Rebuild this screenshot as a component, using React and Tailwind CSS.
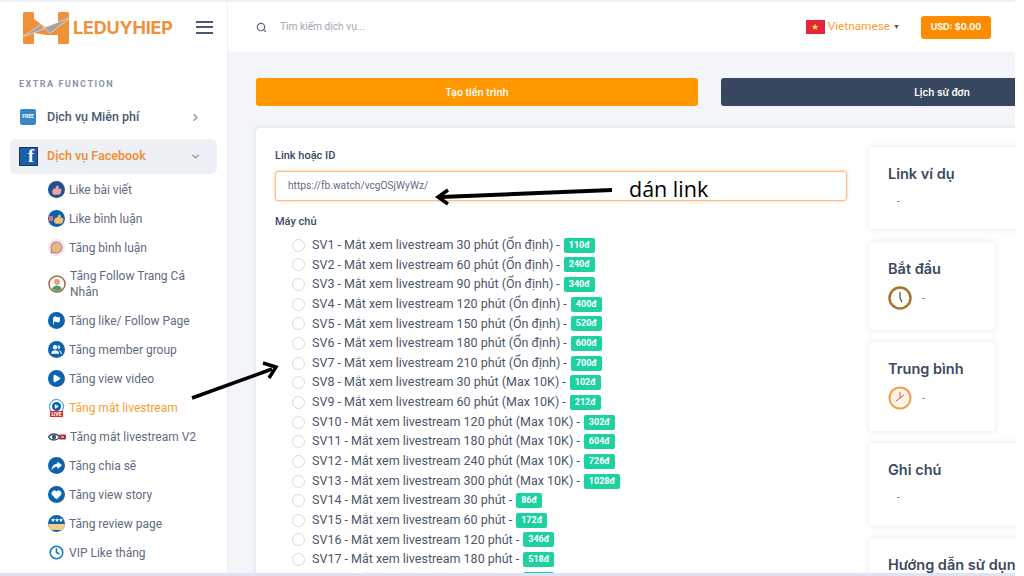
import React from 'react';
import { ChevronRight, ChevronDown, Search, ThumbsUp, Flag, Users, Play, Heart, Star, Clock, MessageCircle } from 'lucide-react';

const subItems = [
    { name: 'Like bài viết', icon: 'like' },
    { name: 'Like bình luận', icon: 'likeComment' },
    { name: 'Tăng bình luận', icon: 'comment' },
    { name: 'Tăng Follow Trang Cá Nhân', icon: 'person' },
    { name: 'Tăng like/ Follow Page', icon: 'flag' },
    { name: 'Tăng member group', icon: 'users' },
    { name: 'Tăng view video', icon: 'play' },
    { name: 'Tăng mắt livestream', icon: 'live', active: true },
    { name: 'Tăng mắt livestream V2', icon: 'eye' },
    { name: 'Tăng chia sẽ', icon: 'share' },
    { name: 'Tăng view story', icon: 'heart' },
    { name: 'Tăng review page', icon: 'review' },
    { name: 'VIP Like tháng', icon: 'vip' },
];

const servers = [
    ['SV1 - Mắt xem livestream 30 phút (Ổn định) -', '110đ'],
    ['SV2 - Mắt xem livestream 60 phút (Ổn định) -', '240đ'],
    ['SV3 - Mắt xem livestream 90 phút (Ổn định) -', '340đ'],
    ['SV4 - Mắt xem livestream 120 phút (Ổn định) -', '400đ'],
    ['SV5 - Mắt xem livestream 150 phút (Ổn định) -', '520đ'],
    ['SV6 - Mắt xem livestream 180 phút (Ổn định) -', '600đ'],
    ['SV7 - Mắt xem livestream 210 phút (Ổn định) -', '700đ'],
    ['SV8 - Mắt xem livestream 30 phút (Max 10K) -', '102đ'],
    ['SV9 - Mắt xem livestream 60 phút (Max 10K) -', '212đ'],
    ['SV10 - Mắt xem livestream 120 phút (Max 10K) -', '302đ'],
    ['SV11 - Mắt xem livestream 180 phút (Max 10K) -', '604đ'],
    ['SV12 - Mắt xem livestream 240 phút (Max 10K) -', '726đ'],
    ['SV13 - Mắt xem livestream 300 phút (Max 10K) -', '1028đ'],
    ['SV14 - Mắt xem livestream 30 phút -', '86đ'],
    ['SV15 - Mắt xem livestream 60 phút -', '172đ'],
    ['SV16 - Mắt xem livestream 120 phút -', '346đ'],
    ['SV17 - Mắt xem livestream 180 phút -', '518đ'],
    ['SV18 - Mắt xem livestream 240 phút -', '690đ'],
];

const Disc = ({ bg = 'bg-[#0b62ad]', children }) => (
    <span className={`flex h-[17px] w-[17px] shrink-0 items-center justify-center overflow-hidden rounded-full text-white ${bg}`}>{children}</span>
);

const SubIcon = ({ type }) => {
    if (type === 'like') return <Disc bg="bg-[#23508f]"><ThumbsUp size={10} fill="#f3a6a0" stroke="#f3a6a0" /></Disc>;
    if (type === 'likeComment') {
        return (
            <Disc>
                <span className="mr-[1px] h-[5px] w-[4px] bg-[#ef6a6a]"></span>
                <ThumbsUp size={10} fill="#f6c26b" stroke="#f6c26b" />
            </Disc>
        );
    }
    if (type === 'comment') return <Disc bg="bg-[#efe6f3]"><MessageCircle size={13} fill="#e8b48c" stroke="#b98a6a" /></Disc>;
    if (type === 'person') {
        return (
            <svg width="18" height="18" viewBox="0 0 18 18" className="shrink-0">
                <circle cx="9" cy="9" r="8" fill="#fff" stroke="#9a6b45" strokeWidth="1.5" />
                <circle cx="9" cy="7" r="3" fill="#e9a27e" />
                <path d="M4 14c1-3 3-3.500 5-3.500s4 .5 5 3.500a7 7 0 0 1-10 0z" fill="#4f9b6e" />
            </svg>
        );
    }
    if (type === 'flag') return <Disc><Flag size={9} fill="#fff" /></Disc>;
    if (type === 'users') return <Disc><Users size={11} fill="#fff" /></Disc>;
    if (type === 'play') return <Disc><Play size={9} fill="#fff" /></Disc>;
    if (type === 'live') {
        return (
            <span className="relative flex h-[18px] w-[17px] shrink-0 items-start justify-center">
                <span className="flex h-[15px] w-[15px] items-center justify-center rounded-full border border-[#2f86c9] bg-white">
                    <span className="flex h-[9px] w-[9px] items-center justify-center rounded-full bg-[#0b62ad] text-white"><Play size={5} fill="#fff" /></span>
                </span>
                <span className="absolute bottom-0 left-[2px] h-[6px] w-[13px] bg-[#e52b2b] text-center font-bold leading-[6px] text-[5px] text-white">LIVE</span>
            </span>
        );
    }
    if (type === 'eye') {
        return (
            <svg width="18" height="10" viewBox="0 0 18 10" className="shrink-0">
                <path d="M0.500 5C3 1 9 1 11.500 5C9 9 3 9 0.500 5z" fill="#fff" stroke="#44546f" strokeWidth="1.300" />
                <circle cx="6" cy="5" r="2.200" fill="#44546f" />
                <rect x="11" y="2.500" width="7" height="5" rx="1" fill="#a8324a" />
                <rect x="13" y="4.500" width="3" height="1" fill="#fff" />
            </svg>
        );
    }
    if (type === 'share') {
        return (
            <Disc>
                <svg width="11" height="10" viewBox="0 0 11 10">
                    <path d="M6.500 0.500L11 4.200L6.500 8V5.700C4 5.700 2 6.500 0.500 9.500C0.800 5.500 3 2.800 6.500 2.500z" fill="#fff" />
                </svg>
            </Disc>
        );
    }
    if (type === 'heart') return <Disc><Heart size={11} fill="#fff" /></Disc>;
    if (type === 'review') {
        return (
            <Disc>
                <span className="flex flex-col items-center">
                    <span className="flex"><Star size={4} fill="#fff" /><Star size={4} fill="#fff" /><Star size={4} fill="#fff" /></span>
                    <span className="mt-[2px] h-[6px] w-[17px] bg-[#f0cf87]"></span>
                </span>
            </Disc>
        );
    }
    return (
        <span className="flex h-[17px] w-[17px] shrink-0 items-center justify-center text-[#1479c4]"><Clock size={15} strokeWidth={2.5} /></span>
    );
};

const Logo = () => (
    <div className="flex items-center">
        <svg width="52" height="36" viewBox="0 0 52 36" className="shrink-0">
            <rect x="2" y="3" width="11" height="32" rx="1.500" fill="#f0913a" />
            <rect x="37" y="3" width="11" height="32" rx="1.500" fill="#f0913a" />
            <path d="M13 10L24 18L37 14V26H26L13 24z" fill="#f0913a" />
            <path d="M0.700 28.300L20.700 15L22.300 19.300L50.700 7.700L29 24.300L24 19.500z" fill="#a3a3a3" stroke="#fff" strokeWidth="0.500" />
        </svg>
        <span className="ml-[0px] text-[18px] font-bold tracking-[-0.2px] text-[#f0913a] [font-family:Inter,sans-serif]">LEDUYHIEP</span>
    </div>
);

const InfoCard = ({ title, children, box }) => (
    <div className={`shrink-0 rounded-[4px] bg-white px-[19px] pt-[17px] shadow-[0_0_6px_rgba(60,70,90,0.14)] ${box}`}>
        <h4 className="text-[14.500px] font-semibold leading-[20px] text-[#3b4a5f] [font-family:Inter,sans-serif]">{title}</h4>
        {children}
    </div>
);

const ClockBrown = () => (
    <svg width="24" height="24" viewBox="0 0 24 24">
        <circle cx="12" cy="12" r="10.500" fill="#fff" stroke="#a8742f" strokeWidth="2.500" />
        <path d="M12 6v6l2 4" fill="none" stroke="#4a4a4a" strokeWidth="1.200" />
    </svg>
);

const ClockOrange = () => (
    <svg width="24" height="24" viewBox="0 0 24 24">
        <circle cx="12" cy="12" r="10.500" fill="#fdf3e6" stroke="#f0a04b" strokeWidth="2" />
        <path d="M12 6v6l-4 3M12 12l4-3" fill="none" stroke="#d9534f" strokeWidth="1" />
    </svg>
);

const App = () => {
    return (
        <div className="h-[576px] w-[1024px] overflow-hidden bg-white [font-family:Roboto,sans-serif]">
            <div className="relative h-[573px] w-[1015px] overflow-hidden border-t-2 border-[#eef1f5]">
                <div className="flex h-full">
                    {/* Sidebar */}
                    <aside className="w-[228px] shrink-0 overflow-hidden border-r border-[#eef0f4] bg-white">
                        <div className="flex h-[50px] items-center pl-[21px] pr-[14px]">
                            <Logo />
                            <div className="ml-auto flex h-[13px] w-[17px] flex-col justify-between">
                                <span className="h-[2px] bg-[#4a5a70]"></span>
                                <span className="h-[2px] bg-[#4a5a70]"></span>
                                <span className="h-[2px] bg-[#4a5a70]"></span>
                            </div>
                        </div>
                        <p className="mt-[26px] pl-[19px] text-[9px] font-bold leading-[12px] tracking-[1.5px] text-[#8a94a6]">EXTRA FUNCTION</p>
                        <div className="mx-[10px] mt-[10px] flex h-[34px] items-center px-[10px]">
                            <span className="flex h-[16px] w-[16px] items-center justify-center rounded-[2px] bg-[#3a87c8] text-[5px] font-bold text-white">FREE</span>
                            <span className="ml-[11px] text-[12.500px] font-medium text-[#4a5a70]">Dịch vụ Miễn phí</span>
                            <ChevronRight size={11} strokeWidth={3} className="ml-auto mr-[6px] text-[#8a94a6]" />
                        </div>
                        <div className="mx-[10px] mt-[5px] flex h-[35px] items-center rounded-[6px] bg-[#edf0f5] px-[9px]">
                            <span className="flex h-[19px] w-[19px] items-end justify-end border border-[#17385f] bg-[#1b5fa8] pr-[3px] text-[18px] font-bold leading-[17px] text-white [font-family:'Liberation_Serif',serif]">f</span>
                            <span className="ml-[9px] text-[12.500px] font-semibold text-[#f0913a]">Dịch vụ Facebook</span>
                            <ChevronDown size={11} strokeWidth={3} className="ml-auto mr-[7px] text-[#8a94a6]" />
                        </div>
                        <nav className="mt-[1px] flex flex-col pl-[48px] pr-[20px]">
                            {subItems.map((item) => (
                                <div key={item.name} className="flex items-center gap-[4px] py-[6px]">
                                    <SubIcon type={item.icon} />
                                    <span className={`text-[12px] leading-[16px] ${item.active ? 'text-[#f7a02e]' : 'text-[#5f6b80]'}`}>{item.name}</span>
                                </div>
                            ))}
                            <span className="mt-[6px] h-[17px] w-[17px] rounded-full border border-[#8a94a6]"></span>
                        </nav>
                    </aside>

                    {/* Main */}
                    <div className="min-w-0 flex-1 overflow-hidden bg-[#f3f5f9]">
                        <header className="flex h-[50px] items-center bg-white pl-[28px]">
                            <Search size={11} strokeWidth={2.5} className="text-[#5c6778]" />
                            <span className="ml-[13px] text-[10.200px] text-[#a0a8b5]">Tìm kiếm dịch vụ...</span>
                            <div className="ml-auto flex items-center">
                                <span className="mr-[3px] flex h-[14px] w-[19px] items-center justify-center bg-[#e4253c] text-[9px] leading-none text-[#ffd83a]">★</span>
                                <span className="text-[11.800px] text-[#f7a02e]">Vietnamese</span>
                                <span className="ml-[3px] text-[7px] text-[#555]">▼</span>
                                <span className="ml-[21px] mr-[24px] flex h-[23px] w-[70px] items-center justify-center rounded-[3px] bg-[#ff8c00] text-[9px] font-bold text-white [font-family:Inter,sans-serif]">USD: $0.00</span>
                            </div>
                        </header>

                        <div className="pl-[28px]">
                            <div className="flex w-[1000px] gap-[23px] pt-[26px]">
                                <button className="h-[28px] w-[442px] rounded-[3px] bg-[#ff9800] text-[10px] font-semibold text-white [font-family:Inter,sans-serif]">Tạo tiến trình</button>
                                <button className="h-[28px] w-[442px] rounded-[3px] bg-[#36475f] text-[10px] font-semibold text-white [font-family:Inter,sans-serif]">Lịch sử đơn</button>
                            </div>

                            <div className="mt-[22px] flex h-[500px] w-[1000px] rounded-[4px] bg-white pl-[19px] pt-[20px] shadow-[0_0_5px_rgba(60,70,90,0.12)]">
                                <div className="w-[572px] shrink-0">
                                    <label className="block text-[11px] font-medium leading-[16px] text-[#3b4a5f]">Link hoặc ID</label>
                                    <div className="mt-[7px] flex h-[30px] items-center rounded-[3px] border border-[#f5c08c] pl-[12px] text-[10.200px] text-[#5f6b80] shadow-[0_0_3px_rgba(240,150,60,0.6)]">
                                        https://fb.watch/vcgOSjWyWz/
                                    </div>
                                    <label className="mt-[13px] block text-[11px] font-medium leading-[16px] text-[#3b4a5f]">Máy chủ</label>
                                    <div className="mt-[5.500px] flex flex-col pl-[17px]">
                                        {servers.map(([name, price]) => (
                                            <div key={name} className="flex h-[19.650px] items-center">
                                                <span className="h-[13px] w-[13px] shrink-0 rounded-full border-[1.500px] border-[#d5d9e2] bg-white"></span>
                                                <span className="ml-[7px] text-[12.500px] text-[#4c5668]">{name}</span>
                                                <span className="ml-[4px] rounded-[2px] bg-[#1dd1a1] px-[5px] text-[9px] font-bold leading-[15px] text-white">{price}</span>
                                            </div>
                                        ))}
                                    </div>
                                </div>

                                <div className="ml-[22px] flex flex-col">
                                    <InfoCard title="Link ví dụ" box="-mt-[1px] h-[82px] w-[300px]">
                                        <p className="mt-[10px] pl-[9px] text-[10px] text-[#667]">-</p>
                                    </InfoCard>
                                    <InfoCard title="Bắt đầu" box="mt-[13px] h-[88px] w-[126px]">
                                        <div className="mt-[7px] flex items-center gap-[10px]"><ClockBrown /><span className="text-[10px] text-[#667]">-</span></div>
                                    </InfoCard>
                                    <InfoCard title="Trung bình" box="mt-[12px] h-[89px] w-[126px]">
                                        <div className="mt-[7px] flex items-center gap-[10px]"><ClockOrange /><span className="text-[10px] text-[#667]">-</span></div>
                                    </InfoCard>
                                    <InfoCard title="Ghi chú" box="mt-[12px] h-[83px] w-[300px]">
                                        <p className="mt-[10px] pl-[9px] text-[10px] text-[#667]">-</p>
                                    </InfoCard>
                                    <InfoCard title="Hướng dẫn sử dụng" box="mt-[12px] h-[84px] w-[300px]" />
                                </div>
                            </div>
                        </div>
                    </div>
                </div>

                {/* Annotations on top of the screenshot */}
                <svg width="1015" height="573" viewBox="0 0 1015 573" className="pointer-events-none absolute left-0 top-[-2px]">
                    <path d="M612 190L441 197" stroke="#000" strokeWidth="4" fill="none" />
                    <path d="M448 190L438 197L448 204" stroke="#000" strokeWidth="3.500" fill="none" />
                    <path d="M192 398L272 369" stroke="#000" strokeWidth="3.500" fill="none" />
                    <path d="M263 363L276 367L269 378" stroke="#000" strokeWidth="3.500" fill="none" />
                </svg>
                <span className="absolute left-[629px] top-[174px] text-[21.500px] leading-[26px] text-black [font-family:'Open_Sans',sans-serif]">dán link</span>
            </div>
            <div className="h-[3px] w-[1015px] bg-[#dfe3f3]"></div>
        </div>
    );
};

export default App;
